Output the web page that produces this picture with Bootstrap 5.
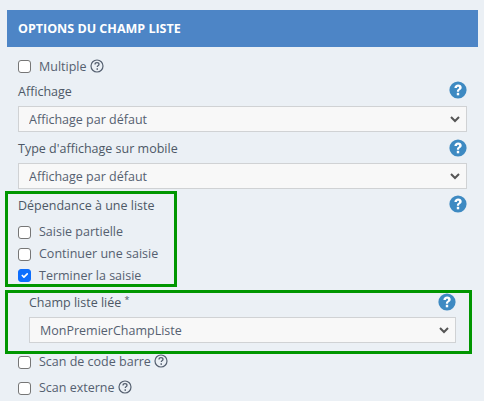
<!DOCTYPE html>
<html lang="fr">
<head>
<meta charset="utf-8">
<title>Options du champ liste</title>
<link href="https://cdn.jsdelivr.net/npm/bootstrap@5.3.3/dist/css/bootstrap.min.css" rel="stylesheet">
<style>
  html, body { height: 401px; overflow: hidden; }
  body {
    background-color: #ebf0f5;
    color: #556070;
    font-family: "Open Sans", "Noto Sans", sans-serif;
    font-size: 12.5px;
    line-height: 18px;
  }
  .wrap { padding: 10px 6px 0 7px; }
  .head-bar {
    background-color: #4d85c6;
    color: #fff;
    font-weight: 700;
    font-size: 12.5px;
    height: 37px;
    padding-left: 11px;
  }
  .fields { padding: 0 11px; }
  .field-top { height: 23px; }
  .field-top.tall { height: 31px; }
  .field-top.tall label { padding-top: 2px; }
  .field-top label { margin: 0; color: #4d5866; }
  .check-row { height: 23px; }
  .check-row .form-check-input {
    width: 13px;
    height: 13px;
    margin: 0 8px 0 0;
    border: 1px solid #767676;
    border-radius: 3px;
    flex: none;
  }
  .check-row .form-check-input:checked { background-color: #0d6efd; border-color: #0d6efd; }
  .multi-row { margin-top: 8px; }
  .aff-row { margin-top: 2px; }
  .aff-row .help-big { margin-bottom: 4px; }
  .help-small { margin-left: 3px; margin-bottom: 2px; flex: none; }
  .help-big { flex: none; }
  .fields .form-select {
    height: 26px;
    padding: 2px 30px 0 10px;
    background-color: #f8f8f8;
    background-image: url("data:image/svg+xml,%3csvg xmlns='http://www.w3.org/2000/svg' viewBox='0 0 10 7'%3e%3cpath fill='none' stroke='%23555' stroke-width='2' d='M1 1l4 4 4-4'/%3e%3c/svg%3e");
    background-size: 10px 7px;
    background-position: right 6px center;
    border: 1px solid #d0d2d4;
    border-radius: 0;
    color: #556070;
    font-size: 12.5px;
    line-height: 18px;
  }
  .dep-wrap { margin: 2px 0 3px -13px; }
  .dep-wrap .help-big { margin-top: 4px; }
  .green-one {
    border: 3px solid #009600;
    width: 172px;
    height: 96px;
    padding: 0 0 0 10px;
  }
  .green-two {
    border: 3px solid #009600;
    height: 64px;
    margin: 0 -5px 0 -13px;
    padding: 0 13px 0 21px;
  }
  .green-one .dep-label { height: 24px; color: #4d5866; }
  .row-first { margin-top: 3px; height: 22px; }
  .row-second { height: 22px; }
  .row-third { height: 19px; padding-top: 2px; }
  .green-two .field-top { height: 24px; }
  .green-two label { margin: 0; padding-top: 1px; color: #4d5866; }
  .green-two sup { font-size: 9px; top: -4px; }
  .scan-one { height: 16px; }
  .scan-two { height: 26px; margin-top: 5px; }
</style>
</head>
<body>
<svg width="0" height="0" class="position-absolute">
  <symbol id="help-dot" viewBox="0 0 18 18">
    <circle cx="9" cy="9" r="8.6" fill="#3e8ac2"/>
    <path d="M5.400 7c.1-2.300 1.600-3.500 3.800-3.500 2.100 0 3.500 1.100 3.500 2.900 0 1.300-.7 2-1.600 2.600-.8.5-1 .8-1 1.500v.3H7.900v-.5c0-1.200.5-1.800 1.200-2.300.7-.5 1-.8 1-1.300 0-.6-.4-1-1-1-.7 0-1.100.5-1.200 1.300z" fill="#fff"/>
    <rect x="7.800" y="11.800" width="2.400" height="2.500" fill="#fff"/>
  </symbol>
  <symbol id="help-ring" viewBox="0 0 14 14">
    <circle cx="7" cy="7" r="6" fill="none" stroke="#556070" stroke-width="1.200"/>
    <path d="M5 5.500c0-1.200.9-1.800 2-1.800s2 .6 2 1.600c0 .8-.5 1.200-1 1.500-.5.300-.7.600-.7 1.100" fill="none" stroke="#556070" stroke-width="1.300"/>
    <rect x="6.500" y="9.300" width="1.500" height="1.500" fill="#556070"/>
  </symbol>
</svg>

<div class="wrap">
  <div class="head-bar d-flex align-items-center">OPTIONS DU CHAMP LISTE</div>

  <div class="fields">
    <div class="check-row multi-row d-flex align-items-center">
      <input class="form-check-input" type="checkbox" id="multiple">
      <label for="multiple">Multiple</label>
      <svg class="help-small" width="14" height="14"><use href="#help-ring"/></svg>
    </div>

    <div class="field-top aff-row d-flex justify-content-between align-items-center">
      <label>Affichage</label>
      <svg class="help-big" width="18" height="18"><use href="#help-dot"/></svg>
    </div>
    <select class="form-select" style="margin-top: 3px"><option>Affichage par défaut</option></select>

    <div class="field-top tall d-flex justify-content-between align-items-center">
      <label>Type d'affichage sur mobile</label>
      <svg class="help-big" width="18" height="18"><use href="#help-dot"/></svg>
    </div>
    <select class="form-select"><option>Affichage par défaut</option></select>

    <div class="dep-wrap d-flex justify-content-between align-items-start">
      <div class="green-one">
        <div class="dep-label d-flex align-items-center">Dépendance à une liste</div>
        <div class="check-row row-first d-flex align-items-center">
          <input class="form-check-input" type="checkbox" id="partielle">
          <label for="partielle">Saisie partielle</label>
        </div>
        <div class="check-row row-second d-flex align-items-center">
          <input class="form-check-input" type="checkbox" id="continuer">
          <label for="continuer">Continuer une saisie</label>
        </div>
        <div class="check-row row-third d-flex align-items-center">
          <input class="form-check-input" type="checkbox" id="terminer" checked>
          <label for="terminer">Terminer la saisie</label>
        </div>
      </div>
      <svg class="help-big" width="18" height="18"><use href="#help-dot"/></svg>
    </div>

    <div class="green-two">
      <div class="field-top d-flex justify-content-between align-items-start">
        <label>Champ liste liée <sup>*</sup></label>
        <svg class="help-big" width="18" height="18"><use href="#help-dot"/></svg>
      </div>
      <select class="form-select"><option>MonPremierChampListe</option></select>
    </div>

    <div class="check-row scan-one d-flex align-items-center">
      <input class="form-check-input" type="checkbox" id="scancode">
      <label for="scancode">Scan de code barre</label>
      <svg class="help-small" width="14" height="14"><use href="#help-ring"/></svg>
    </div>
    <div class="check-row scan-two d-flex align-items-center">
      <input class="form-check-input" type="checkbox" id="scanext">
      <label for="scanext">Scan externe</label>
      <svg class="help-small" width="14" height="14"><use href="#help-ring"/></svg>
    </div>
  </div>
</div>
</body>
</html>
